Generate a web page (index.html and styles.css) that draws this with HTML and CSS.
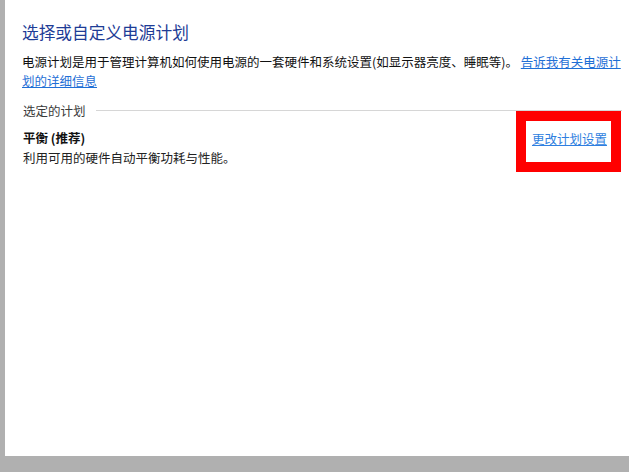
FILE: index.html
```html
<!DOCTYPE html>
<html lang="zh-CN">
<head>
<meta charset="utf-8">
<title>选择或自定义电源计划</title>
<link rel="stylesheet" href="styles.css">
</head>
<body>
<div class="window">
  <h1 class="title">选择或自定义电源计划</h1>
  <p class="desc">电源计划是用于管理计算机如何使用电源的一套硬件和系统设置(如显示器亮度、睡眠等)。 <a class="link" href="#">告诉我有关电源计划的详细信息</a></p>
  <div class="section">
    <span class="section-label">选定的计划</span>
    <span class="section-line"></span>
  </div>
  <div class="plan">
    <div class="plan-info">
      <div class="plan-name">平衡 (推荐)</div>
      <div class="plan-desc">利用可用的硬件自动平衡功耗与性能。</div>
    </div>
    <a class="plan-link" href="#">更改计划设置</a>
  </div>
</div>
</body>
</html>
```

FILE: styles.css
```css
html, body {
  margin: 0;
  padding: 0;
  height: 100%;
}
body {
  background: #b0b0b0;
  font-family: "Noto Sans CJK SC", "Noto Sans", sans-serif;
  font-size: 12.5px;
  color: #111111;
}
.window {
  background: #ffffff;
  margin-left: 5px;
  height: 456px;
  box-sizing: border-box;
  padding: 21px 4px 0 17px;
}
.title {
  margin: 0;
  font-size: 16.7px;
  line-height: 22px;
  font-weight: normal;
  color: #1e3c96;
}
.desc {
  margin: 9px 0 0 0;
  line-height: 19px;
}
.link {
  color: #1f6fd6;
  text-decoration: underline;
}
.section {
  display: flex;
  align-items: center;
  margin-top: 11px;
  margin-right: 3px;
  line-height: 19px;
}
.section-label {
  color: #3a3a3a;
  padding-left: 1px;
}
.section-line {
  flex: 1;
  height: 1px;
  background: #d6d6d6;
  margin-left: 10px;
}
.plan {
  display: flex;
  justify-content: space-between;
  align-items: flex-start;
  margin-top: 8px;
  padding-left: 1px;
}
.plan-info {
  line-height: 20px;
}
.plan-name {
  font-weight: bold;
  color: #111;
}
.plan-desc {
  color: #222;
}
.plan-link {
  position: relative;
  line-height: 20px;
  margin-top: 1px;
  margin-right: 18px;
  color: #2f7fe0;
  text-decoration: underline;
}
.plan-link::before {
  content: "";
  position: absolute;
  left: -16px;
  right: -14px;
  top: -18px;
  bottom: -23px;
  border: 10px solid #ff0000;
}
```
